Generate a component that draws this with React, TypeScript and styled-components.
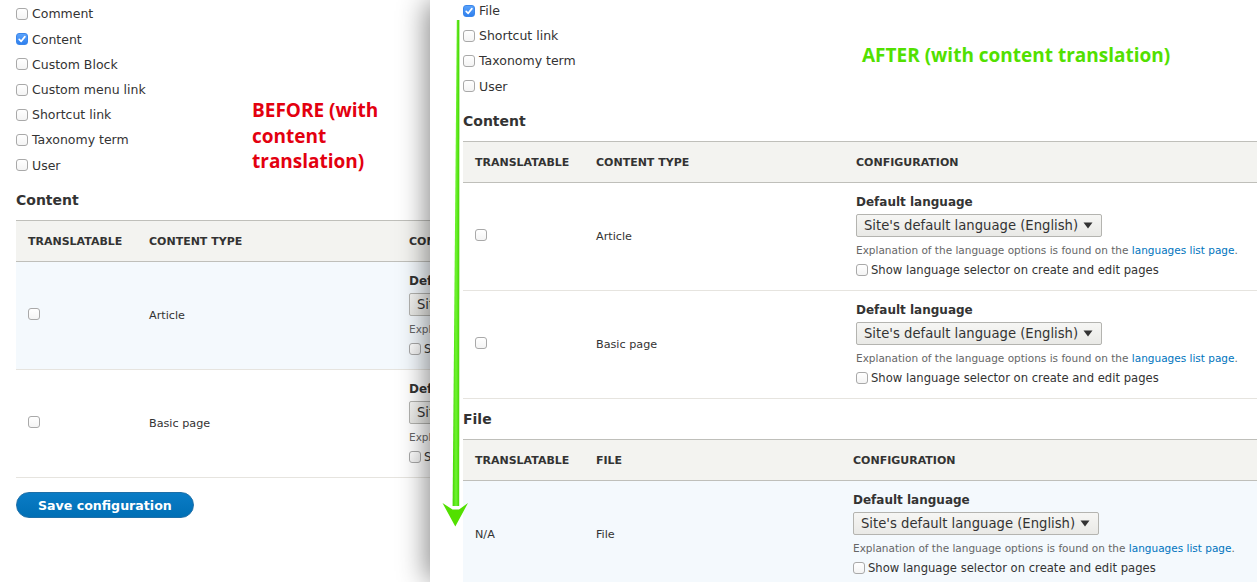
import React from "react";
import styled, { createGlobalStyle } from "styled-components";

type Entity = { label: string; checked?: boolean };

const beforeEntities: Entity[] = [
  { label: "Comment" },
  { label: "Content", checked: true },
  { label: "Custom Block" },
  { label: "Custom menu link" },
  { label: "Shortcut link" },
  { label: "Taxonomy term" },
  { label: "User" },
];

const afterEntities: Entity[] = [
  { label: "File", checked: true },
  { label: "Shortcut link" },
  { label: "Taxonomy term" },
  { label: "User" },
];

const GlobalStyle = createGlobalStyle`
  html, body {
    margin: 0;
    padding: 0;
    background: #fff;
  }
  body {
    font-family: "DejaVu Sans", "Liberation Sans", sans-serif;
    color: #333;
    overflow: hidden;
  }
  * { box-sizing: border-box; }
`;

const Check = ({ checked }: { checked?: boolean }) => (
  <Box $checked={checked}>
    {checked && (
      <svg width="10" height="10" viewBox="0 0 10 10">
        <path d="M2.2 5.3 L4.2 7.3 L7.9 2.6" fill="none" stroke="#fff" strokeWidth="1.7" strokeLinecap="round" strokeLinejoin="round" />
      </svg>
    )}
  </Box>
);

const LanguageConfig = () => (
  <>
    <FieldLabel>Default language</FieldLabel>
    <Select>
      <span>Site's default language (English)</span>
      <svg width="10" height="7" viewBox="0 0 10 7">
        <path d="M0.5 0.5 H9.5 L5 6.5 Z" fill="#333" />
      </svg>
    </Select>
    <Help>
      Explanation of the language options is found on the <Link>languages list page</Link>.
    </Help>
    <Option>
      <Check />
      Show language selector on create and edit pages
    </Option>
  </>
);

type RowData = { first: string; name: string; highlight?: boolean; checkbox?: boolean };

const Settings = ({ title, second, rows, mid }: { title: string; second: string; rows: RowData[]; mid: number }) => (
  <>
    <Heading>{title}</Heading>
    <Table>
      <thead>
        <tr>
          <Th $w={121}>Translatable</Th>
          <Th $w={mid}>{second}</Th>
          <Th>Configuration</Th>
        </tr>
      </thead>
      <tbody>
        {rows.map((r) => (
          <Row key={r.name} $highlight={r.highlight}>
            <Td>{r.checkbox ? <Check /> : r.first}</Td>
            <Td>{r.name}</Td>
            <ConfigTd>
              <LanguageConfig />
            </ConfigTd>
          </Row>
        ))}
      </tbody>
    </Table>
  </>
);

export default function App() {
  return (
    <Page>
      <GlobalStyle />
      <BeforePanel>
        <Inner>
          <TopRow>
            <EntityList $width={236}>
              {beforeEntities.map((e) => (
                <EntityItem key={e.label}>
                  <Check checked={e.checked} />
                  {e.label}
                </EntityItem>
              ))}
            </EntityList>
            <Note $color="#e3000f" $top={97} $width={140}>
              BEFORE (with content translation)
            </Note>
          </TopRow>
          <Settings
            title="Content"
            second="Content type"
            mid={260}
            rows={[
              { first: "", name: "Article", highlight: true, checkbox: true },
              { first: "", name: "Basic page", checkbox: true },
            ]}
          />
          <SaveButton>Save configuration</SaveButton>
        </Inner>
      </BeforePanel>

      <AfterPanel>
        <TopRow $shift={-2}>
          <EntityList $width={399}>
            {afterEntities.map((e) => (
              <EntityItem key={e.label}>
                <Check checked={e.checked} />
                {e.label}
              </EntityItem>
            ))}
          </EntityList>
          <Note $color="#52e000" $top={45}>
            AFTER (with content translation)
          </Note>
        </TopRow>
        <Settings
          title="Content"
          second="Content type"
          mid={260}
          rows={[
            { first: "", name: "Article", checkbox: true },
            { first: "", name: "Basic page", checkbox: true },
          ]}
        />
        <Settings title="File" second="File" mid={257} rows={[{ first: "N/A", name: "File", highlight: true }]} />
      </AfterPanel>

      <Arrow width="1257" height="582" viewBox="0 0 1257 582">
        <defs>
          <linearGradient id="shaft" x1="0" x2="1" y1="0" y2="0">
            <stop offset="0" stopColor="#46d400" />
            <stop offset="0.5" stopColor="#6ef530" />
            <stop offset="1" stopColor="#46d400" />
          </linearGradient>
        </defs>
        <polygon points="456.8,20 459.4,20 459.2,506 452.6,506" fill="url(#shaft)" />
        <polygon points="442.5,503 455.3,526.5 468,503 459,509.5 452.5,509.5" fill="#52e000" />
      </Arrow>
    </Page>
  );
}

const Page = styled.div`
  position: relative;
  display: flex;
  width: 1257px;
  height: 582px;
  overflow: hidden;
`;

const BeforePanel = styled.div`
  width: 430px;
  flex-shrink: 0;
  overflow: hidden;
  padding: 1.4px 0 0 16px;
`;

const Inner = styled.div`
  width: 820px;
`;

const AfterPanel = styled.div`
  position: relative;
  z-index: 1;
  flex: 1;
  min-width: 0;
  background: #fff;
  padding-left: 33px;
  box-shadow: -6px 0 26px -2px rgba(0, 0, 0, 0.45);
`;

const TopRow = styled.div<{ $shift?: number }>`
  display: flex;
  align-items: flex-start;
  margin-top: ${(p) => p.$shift ?? 0}px;
`;

const EntityList = styled.div<{ $width: number }>`
  width: ${(p) => p.$width}px;
  flex-shrink: 0;
`;

const EntityItem = styled.label`
  display: flex;
  align-items: center;
  gap: 4px;
  height: 25.2px;
  font-size: 12.5px;
  color: #333;
`;

const Note = styled.div<{ $color: string; $top: number; $width?: number }>`
  padding-top: ${(p) => p.$top}px;
  width: ${(p) => (p.$width ? `${p.$width}px` : "auto")};
  font-family: "Open Sans", "DejaVu Sans", sans-serif;
  font-weight: 700;
  font-size: 19px;
  line-height: 25.5px;
  color: ${(p) => p.$color};
`;

const Box = styled.span<{ $checked?: boolean }>`
  display: inline-flex;
  align-items: center;
  justify-content: center;
  flex-shrink: 0;
  width: 12px;
  height: 12px;
  border-radius: 3px;
  border: 1px solid ${(p) => (p.$checked ? "#3a86ea" : "#a9a9a9")};
  background: ${(p) =>
    p.$checked ? "linear-gradient(#5aa2fb, #2f80ee)" : "linear-gradient(#ffffff, #f4f4f4)"};
`;

const Heading = styled.h2`
  margin: 12.5px 0 10px;
  font-size: 14px;
  line-height: 20px;
  font-weight: 700;
  color: #333;

  table + & {
    margin-top: 10px;
  }
`;

const Table = styled.table`
  width: 100%;
  border-collapse: collapse;
  font-size: 11.2px;
`;

const Th = styled.th<{ $w?: number }>`
  width: ${(p) => (p.$w ? `${p.$w}px` : "auto")};
  height: 41px;
  padding: 0 12px;
  text-align: left;
  text-transform: uppercase;
  font-size: 11px;
  font-weight: 700;
  color: #333;
  background: #f3f3f0;
  border-top: 1px solid #bfbfba;
  border-bottom: 1px solid #bfbfba;
`;

const Row = styled.tr<{ $highlight?: boolean }>`
  background: ${(p) => (p.$highlight ? "#f4f9fd" : "#fff")};
  border-bottom: 1px solid #e6e4df;
`;

const Td = styled.td`
  height: 107px;
  padding: 0 12px;
  vertical-align: middle;
  color: #333;
`;

const ConfigTd = styled.td`
  padding: 12px 12px;
  vertical-align: top;
`;

const FieldLabel = styled.div`
  font-size: 12px;
  line-height: 15px;
  font-weight: 700;
  margin-bottom: 4px;
`;

const Select = styled.div`
  display: flex;
  align-items: center;
  justify-content: space-between;
  width: 246px;
  height: 23px;
  padding: 0 8px 0 7px;
  border: 1px solid #b4b4b0;
  border-radius: 2px;
  background: linear-gradient(#f6f6f4, #e9e9e6);
  font-size: 13.2px;
  color: #333;
`;

const Help = styled.div`
  margin-top: 6px;
  font-size: 10.5px;
  line-height: 14px;
  color: #666;
`;

const Link = styled.a`
  color: #0074bd;
  text-decoration: none;
`;

const Option = styled.label`
  display: flex;
  align-items: center;
  gap: 3px;
  margin-top: 5px;
  height: 16px;
  font-size: 11.6px;
  color: #333;
`;

const SaveButton = styled.button`
  margin-top: 14px;
  height: 26px;
  padding: 0 21px;
  border: 1px solid #1d6fa8;
  border-radius: 20px;
  background: linear-gradient(#0a7cc6, #006fb5);
  color: #fff;
  font-family: "DejaVu Sans", sans-serif;
  font-size: 12.6px;
  font-weight: 700;
`;

const Arrow = styled.svg`
  position: absolute;
  top: 0;
  left: 0;
  z-index: 2;
  pointer-events: none;
`;
